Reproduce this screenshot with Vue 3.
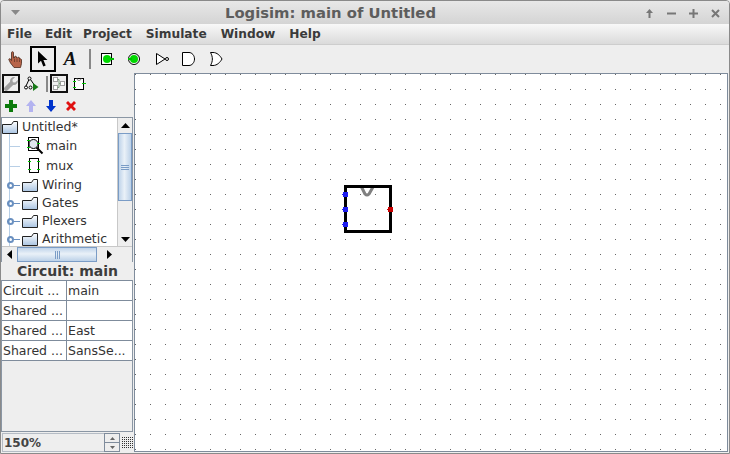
<script setup>
const menus = ['File', 'Edit', 'Project', 'Simulate', 'Window', 'Help']
const libs = ['Wiring', 'Gates', 'Plexers', 'Arithmetic']
const attrs = [
  ['Circuit ...', 'main'],
  ['Shared ...', ''],
  ['Shared ...', 'East'],
  ['Shared ...', 'SansSe...'],
]
</script>

<template>
  <div class="window">
    <header class="titlebar">
      <svg class="win-menu" width="9" height="5" viewBox="0 0 9 5"><path d="M0 0h9L4.500 5z" fill="#888" /></svg>
      <div class="title">Logisim: main of Untitled</div>
      <div class="win-btns">
        <svg width="9" height="9" viewBox="0 0 9 9"><path d="M4.500 0L8 4H5.500V9h-2V4H1z" fill="#777" /></svg>
        <svg width="9" height="9" viewBox="0 0 9 9"><path d="M0 3.500h9v2H0z" fill="#777" /></svg>
        <svg width="9" height="9" viewBox="0 0 9 9"><path d="M3.500 0h2v3.500H9v2H5.500V9h-2V5.500H0v-2h3.500z" fill="#777" /></svg>
        <svg width="9" height="9" viewBox="0 0 9 9"><path d="M1 1l7 7M8 1L1 8" stroke="#777" stroke-width="2" /></svg>
      </div>
    </header>
    <nav class="menubar">
      <span v-for="m in menus" :key="m" class="menu">{{ m }}</span>
    </nav>
    <div class="toolbar">
      <div class="tool">
        <svg width="16" height="17" viewBox="0 0 16 17"><path d="M3.500 1.500c0-1 2-1 2 0V7h1V6c0-1 2-1 2 0v1h1c0-1 2-1 2 0v1c1-.5 2 0 2 1v3.500L12.500 16.500H6L2.500 12 .8 8.500c0-1 1.200-1 1.700-.5L3.500 9.500z" fill="#b8654a" stroke="#4a2a1c" stroke-width=".8" /><path d="M6.500 8v3M9 8v3M11.500 8.500V11" stroke="#4a2a1c" stroke-width=".6" /></svg>
      </div>
      <div class="tool selected">
        <svg width="10" height="16" viewBox="0 0 10 16"><path d="M0 0v12.500l3-2.800 2.300 5.800 2.400-1L5.400 9H9.500z" fill="#000" /></svg>
      </div>
      <div class="tool text-tool">A</div>
      <div class="sep"></div>
      <div class="tool">
        <svg width="18" height="16" viewBox="0 0 18 16"><rect x="3.500" y="2.500" width="10" height="11" fill="#fff" stroke="#000" /><circle cx="9" cy="8" r="4" fill="#00d800" /><path d="M12 7h4v2h-4z" fill="#00c000" /></svg>
      </div>
      <div class="tool">
        <svg width="18" height="16" viewBox="0 0 18 16"><circle cx="9" cy="8" r="5.500" fill="#fff" stroke="#000" /><circle cx="9" cy="8" r="4" fill="#00d800" /><path d="M3 7h4v2H3z" fill="#00c000" /></svg>
      </div>
      <div class="tool">
        <svg width="18" height="16" viewBox="0 0 18 16"><path d="M4.500 2.500L13 8l-8.500 5.500z" fill="#fff" stroke="#000" /><circle cx="15" cy="8" r="1.500" fill="#fff" stroke="#000" /></svg>
      </div>
      <div class="tool">
        <svg width="18" height="16" viewBox="0 0 18 16"><path d="M3.500 1.500H10c3 0 5.500 3 5.500 6.500s-2.500 6.500-5.500 6.500H3.500z" fill="#fff" stroke="#000" /></svg>
      </div>
      <div class="tool">
        <svg width="18" height="16" viewBox="0 0 18 16"><path d="M4.500 1.500H7c4 0 7 3 9 6.500-2 3.500-5 6.500-9 6.500H4.500C7 10 7 6 4.500 1.500z" fill="#fff" stroke="#000" /></svg>
      </div>
    </div>
    <div class="main">
      <aside class="side">
        <div class="side-tools">
          <div class="stool box">
            <svg width="14" height="14" viewBox="0 0 15 15"><path d="M14.800 3.200L12 6l-2.500-.500L9 3 11.800.2C8.500-.5 6 2 6.500 5.200L.7 11c-1 1-.9 2.500 0 3.300.8.900 2.300.900 3.300-.1l5.800-5.700c3.200.5 5.700-2 5-5.300z" fill="#a0a0a0" /></svg>
          </div>
          <div class="stool plain">
            <svg width="15" height="15" viewBox="0 0 15 15"><g fill="#fff" stroke="#000"><path d="M5 3.500L2 10M6.500 3.500l3.500 5" fill="none" /><circle cx="5.500" cy="2.500" r="1.500" /><circle cx="2" cy="11.500" r="1.500" /><circle cx="6.500" cy="11.500" r="1.500" /></g><path d="M9 7l5.500 4L9 15z" fill="#187a18" /></svg>
          </div>
          <div class="sep-sm"></div>
          <div class="stool box">
            <svg width="14" height="15" viewBox="0 0 14 15"><g fill="#fff" stroke="#a0a0a0"><rect x="1.500" y="1.500" width="4" height="4" /><rect x="1.500" y="9.500" width="4" height="4" /><rect x="8.500" y="5.500" width="4" height="4" /></g><path d="M5.500 3.500h1.500v4h1.500M5.500 11.500h1.500v-4" fill="none" stroke="#7a9a7a" /></svg>
          </div>
          <div class="stool plain">
            <svg width="13" height="14" viewBox="0 0 13 14"><rect x="1.500" y="1.500" width="9" height="11" fill="#fff" stroke="#000" /><path d="M4 1.500a2 2 0 0 0 4 0" fill="none" stroke="#888" /><path d="M0 4h3v1H0zM0 10h3v1H0zM9 6h4v1H9z" fill="#00c800" /></svg>
          </div>
        </div>
        <div class="side-actions">
          <svg width="12" height="12" viewBox="0 0 12 12"><path d="M4 0h4v4h4v4H8v4H4V8H0V4h4z" fill="#0b7a0b" /></svg>
          <svg width="12" height="12" viewBox="0 0 12 12"><path d="M6 0l5 6H8v6H4V6H1z" fill="#b3b3f0" /></svg>
          <svg width="12" height="12" viewBox="0 0 12 12"><path d="M6 12L1 6h3V0h4v6h3z" fill="#0033cc" /></svg>
          <svg width="12" height="12" viewBox="0 0 12 12"><path d="M1 3l2-2 3 3 3-3 2 2-3 3 3 3-2 2-3-3-3 3-2-2 3-3z" fill="#e01010" /></svg>
        </div>
        <div class="tree-box">
          <div class="tree-row">
            <div class="tree">
              <div class="node root">
                <svg class="folder" width="16" height="13" viewBox="0 0 16 13">
                  <defs><linearGradient id="fg" x1="0" y1="0" x2="0" y2="1"><stop offset="0" stop-color="#fff" /><stop offset="1" stop-color="#a9c4e2" /></linearGradient></defs>
                  <path d="M.5 3.500h9l2-3h4v12H.5z" fill="url(#fg)" stroke="#222" />
                </svg>
                <span>Untitled*</span>
              </div>
              <div class="node circuit">
                <span class="twig"></span>
                <svg width="18" height="18" viewBox="0 0 18 18"><rect x="2.500" y="0.500" width="10" height="13" fill="#fff" stroke="#000" /><circle cx="7.500" cy="7" r="4.500" fill="#dfe6ee" stroke="#000" /><path d="M10.500 10.500l6 6" stroke="#000" stroke-width="2" /><path d="M1 3.500h3M1 10.500h3M11 6.500h3" stroke="#00c800" /></svg>
                <span>main</span>
              </div>
              <div class="node circuit">
                <span class="twig"></span>
                <svg width="18" height="18" viewBox="0 0 18 18"><rect x="3.500" y="1.500" width="9" height="14" fill="#fff" stroke="#000" /><path d="M2 4.500h3M2 12.500h3M11 4.500h3M11 12.500h3" stroke="#00c800" /></svg>
                <span>mux</span>
              </div>
              <div v-for="l in libs" :key="l" class="node lib">
                <span class="handle"></span>
                <svg class="folder" width="16" height="13" viewBox="0 0 16 13"><path d="M.5 3.500h9l2-3h4v12H.5z" fill="url(#fg)" stroke="#222" /></svg>
                <span>{{ l }}</span>
              </div>
            </div>
            <div class="vbar">
              <div class="arrow-btn top"><svg width="9" height="5" viewBox="0 0 9 5"><path d="M4.500 0L9 5H0z" /></svg></div>
              <div class="vthumb"><i></i><i></i><i></i></div>
              <div class="vtrack"></div>
              <div class="arrow-btn"><svg width="9" height="5" viewBox="0 0 9 5"><path d="M0 0h9L4.500 5z" /></svg></div>
            </div>
          </div>
          <div class="hbar">
            <div class="arrow-btn wide"><svg width="5" height="9" viewBox="0 0 5 9"><path d="M5 0v9L0 4.500z" /></svg></div>
            <div class="hthumb"><i></i><i></i><i></i></div>
            <div class="htrack"></div>
            <div class="arrow-btn wide"><svg width="5" height="9" viewBox="0 0 5 9"><path d="M0 0v9l5-4.500z" /></svg></div>
            <div class="corner"></div>
          </div>
        </div>
        <div class="attr-title">Circuit: main</div>
        <div class="attr-table">
          <div v-for="(a, i) in attrs" :key="i" class="attr-row">
            <div class="cell key">{{ a[0] }}</div>
            <div class="cell">{{ a[1] }}</div>
          </div>
        </div>
        <div class="zoom-row">
          <div class="zoom-val">150%</div>
          <div class="spin">
            <div><svg width="5" height="3" viewBox="0 0 5 3"><path d="M2.500 0L5 3H0z" /></svg></div>
            <div><svg width="5" height="3" viewBox="0 0 5 3"><path d="M0 0h5L2.500 3z" /></svg></div>
          </div>
          <svg class="grid-toggle" width="11" height="11" viewBox="0 0 11 11">
            <defs><pattern id="gt" width="2" height="2" patternUnits="userSpaceOnUse"><rect width="1" height="1" fill="#333" /></pattern></defs>
            <rect width="11" height="11" fill="url(#gt)" />
          </svg>
        </div>
      </aside>
      <main class="canvas">
        <svg class="sheet" width="100%" height="100%">
          <defs><pattern id="dots" width="15" height="15" patternUnits="userSpaceOnUse"><rect x="0" y="0" width="1" height="1" fill="#666" /></pattern></defs>
          <rect width="100%" height="100%" fill="url(#dots)" />
          <path d="M226.500 113L230 120Q232 122 234 120L238 113" fill="none" stroke="#808080" stroke-width="3" />
          <rect x="210.500" y="112.500" width="45" height="45" fill="none" stroke="#000" stroke-width="3" />
          <g fill="#1e1ef0">
            <rect x="208" y="118" width="5" height="5" /><rect x="208" y="133" width="5" height="5" /><rect x="208" y="148" width="5" height="5" />
            <rect x="207" y="120" width="1" height="1" /><rect x="207" y="135" width="1" height="1" /><rect x="207" y="150" width="1" height="1" />
          </g>
          <rect x="253" y="133" width="5" height="5" fill="#c80000" />
          <rect x="252" y="135" width="1" height="1" fill="#c80000" />
        </svg>
      </main>
    </div>
  </div>
</template>

<style>
html, body { margin: 0; background: #eee; }
</style>

<style scoped>
.window {
  width: 730px;
  height: 454px;
  box-sizing: border-box;
  border: 1px solid #8a8a8a;
  border-top-left-radius: 4px;
  border-top-right-radius: 4px;
  background: #eeeeee;
  display: flex;
  flex-direction: column;
  font-family: "DejaVu Sans", sans-serif;
  color: #333;
  overflow: hidden;
}
.titlebar {
  height: 23px;
  flex: none;
  display: flex;
  align-items: center;
  background: linear-gradient(#e8e8e8, #d4d4d4);
  padding: 0 9px 0 10px;
}
.win-menu { flex: none; }
.title {
  flex: 1;
  text-align: center;
  font-weight: bold;
  font-size: 14.800px;
  color: #5d5d5d;
  padding-right: 4px;
}
.win-btns { display: flex; gap: 13px; margin-top: 2px; }
.menubar {
  height: 21px;
  box-sizing: border-box;
  flex: none;
  display: flex;
  align-items: center;
  gap: 14px;
  padding-left: 6px;
  background: linear-gradient(#f8f8f8, #dadada);
  border-bottom: 1px solid #cdcdcd;
  font-weight: bold;
  font-size: 12.200px;
  color: #3a3a3a;
}
.menu:nth-child(1) { margin-right: -1px; }
.menu:nth-child(2) { margin-right: -3px; }
.toolbar {
  height: 28px;
  flex: none;
  display: flex;
  align-items: center;
  padding-left: 1px;
}
.tool {
  width: 27px;
  height: 26px;
  box-sizing: border-box;
  display: flex;
  align-items: center;
  justify-content: center;
  flex: none;
}
.tool.selected { border: 2px solid #000; width: 26px; margin-left: 1px; }
.text-tool { font: bold italic 19px "Liberation Serif", serif; color: #111; width: 28px; }
.sep { width: 2px; height: 20px; background: #888; margin: 0 2px 0 5px; flex: none; }
.main { flex: 1; display: flex; min-height: 0; padding: 0 1px 1px 0; }
.side { width: 133px; flex: none; display: flex; flex-direction: column; }
.side-tools { height: 21px; flex: none; display: flex; align-items: center; padding-left: 1px; box-sizing: border-box; }
.stool { height: 19px; box-sizing: border-box; display: flex; align-items: center; justify-content: center; flex: none; }
.box { width: 18px; border: 2px solid #111; }
.plain { width: 22px; }
.sep-sm { width: 2px; height: 16px; background: #888; margin: 0 2px 0 4px; flex: none; }
.side-actions { height: 23px; flex: none; display: flex; align-items: center; gap: 8px; padding-left: 4px; }
.tree-box { height: 145px; flex: none; border: 1px solid #8a96a4; border-bottom: 0; box-sizing: border-box; margin: 0 1px 0 0; display: flex; flex-direction: column; background: #fff; }
.tree-row { flex: 1; display: flex; min-height: 0; }
.tree { flex: 1; overflow: hidden; font-size: 12.500px; color: #333; background: #fff; position: relative; }
.tree::before { content: ""; position: absolute; left: 7px; top: 14px; bottom: 0; width: 1px; background: #b8cfe6; }
.node { display: flex; align-items: center; white-space: nowrap; position: relative; line-height: 14px; }
.root { height: 18px; gap: 4px; }
.circuit { height: 20px; padding-left: 7px; }
.circuit span:last-child { margin-left: 2px; }
.twig { width: 11px; height: 1px; background: #b8cfe6; margin-right: 6px; flex: none; }
.lib { height: 18px; padding-left: 5px; }
.lib span:last-child { margin-left: 4px; }
.handle { width: 7px; height: 7px; border: 2px solid #6a90c0; border-radius: 50%; box-sizing: border-box; margin-right: 8px; position: relative; flex: none; }
.handle::after { content: ""; position: absolute; left: 5px; top: 1px; width: 6px; height: 1px; background: #6a90c0; }
.vbar { width: 15px; flex: none; display: flex; flex-direction: column; background: #eee; border-left: 1px solid #c8c8c8; box-sizing: border-box; }
.arrow-btn { height: 13px; flex: none; display: flex; align-items: center; justify-content: center; background: #eee; }
.arrow-btn.top { height: 15px; }
.arrow-btn.wide { width: 15px; height: 100%; }
.vthumb { height: 68px; flex: none; background: linear-gradient(90deg, #c0d4ea, #eaf1f8 45%, #bcd1e8); border: 1px solid #7a9cc6; display: flex; flex-direction: column; align-items: center; justify-content: center; gap: 1px; box-sizing: border-box; }
.vthumb i { width: 8px; height: 1px; background: #7a9cc6; }
.vtrack { flex: 1; background: #eee; }
.hbar { height: 16px; flex: none; display: flex; background: #eee; border-top: 1px solid #c8c8c8; box-sizing: border-box; }
.hthumb { width: 80px; flex: none; background: linear-gradient(#c0d4ea, #eaf1f8 45%, #bcd1e8); border: 1px solid #7a9cc6; display: flex; align-items: center; justify-content: center; gap: 1px; box-sizing: border-box; }
.hthumb i { width: 1px; height: 8px; background: #7a9cc6; }
.htrack { width: 5px; flex: none; }
.corner { flex: 1; }
.attr-title { height: 18px; flex: none; text-align: center; line-height: 18px; font-weight: bold; font-size: 14px; color: #3c3c3c; }
.attr-table { flex: 1; margin: 0 1px 1px 0; border: 1px solid #8a96a4; border-top: 0; box-sizing: border-box; min-height: 0; }
.attr-row { display: grid; grid-template-columns: 65px 65px; height: 20px; box-sizing: border-box; }
.cell { background: #fff; border-top: 1px solid #7f8c9c; padding-left: 1px; line-height: 19px; font-size: 12.500px; color: #333; white-space: nowrap; overflow: hidden; box-sizing: border-box; }
.key { border-right: 1px solid #7f8c9c; }
.attr-row:last-child { height: 21px; }
.attr-row:last-child .cell { border-bottom: 1px solid #7f8c9c; }
.zoom-row { height: 19px; flex: none; display: flex; align-items: center; margin-left: 1px; }
.zoom-val { width: 102px; height: 19px; box-sizing: border-box; border: 1px solid #b5bcc5; border-right: 0; font-size: 12px; font-weight: bold; line-height: 18px; color: #444; padding-left: 1px; }
.spin { width: 16px; display: flex; flex-direction: column; height: 19px; flex: none; box-sizing: border-box; border: 1px solid #7f8c9c; }
.spin div { flex: 1; display: flex; align-items: center; justify-content: center; }
.spin div:first-child { border-bottom: 1px solid #7f8c9c; }
.spin svg { fill: #666; }
.grid-toggle { margin-left: 2px; }
.canvas { flex: 1; background: #fff; border: 1px solid #7f8c9c; min-width: 0; }
.sheet { display: block; }
</style>
